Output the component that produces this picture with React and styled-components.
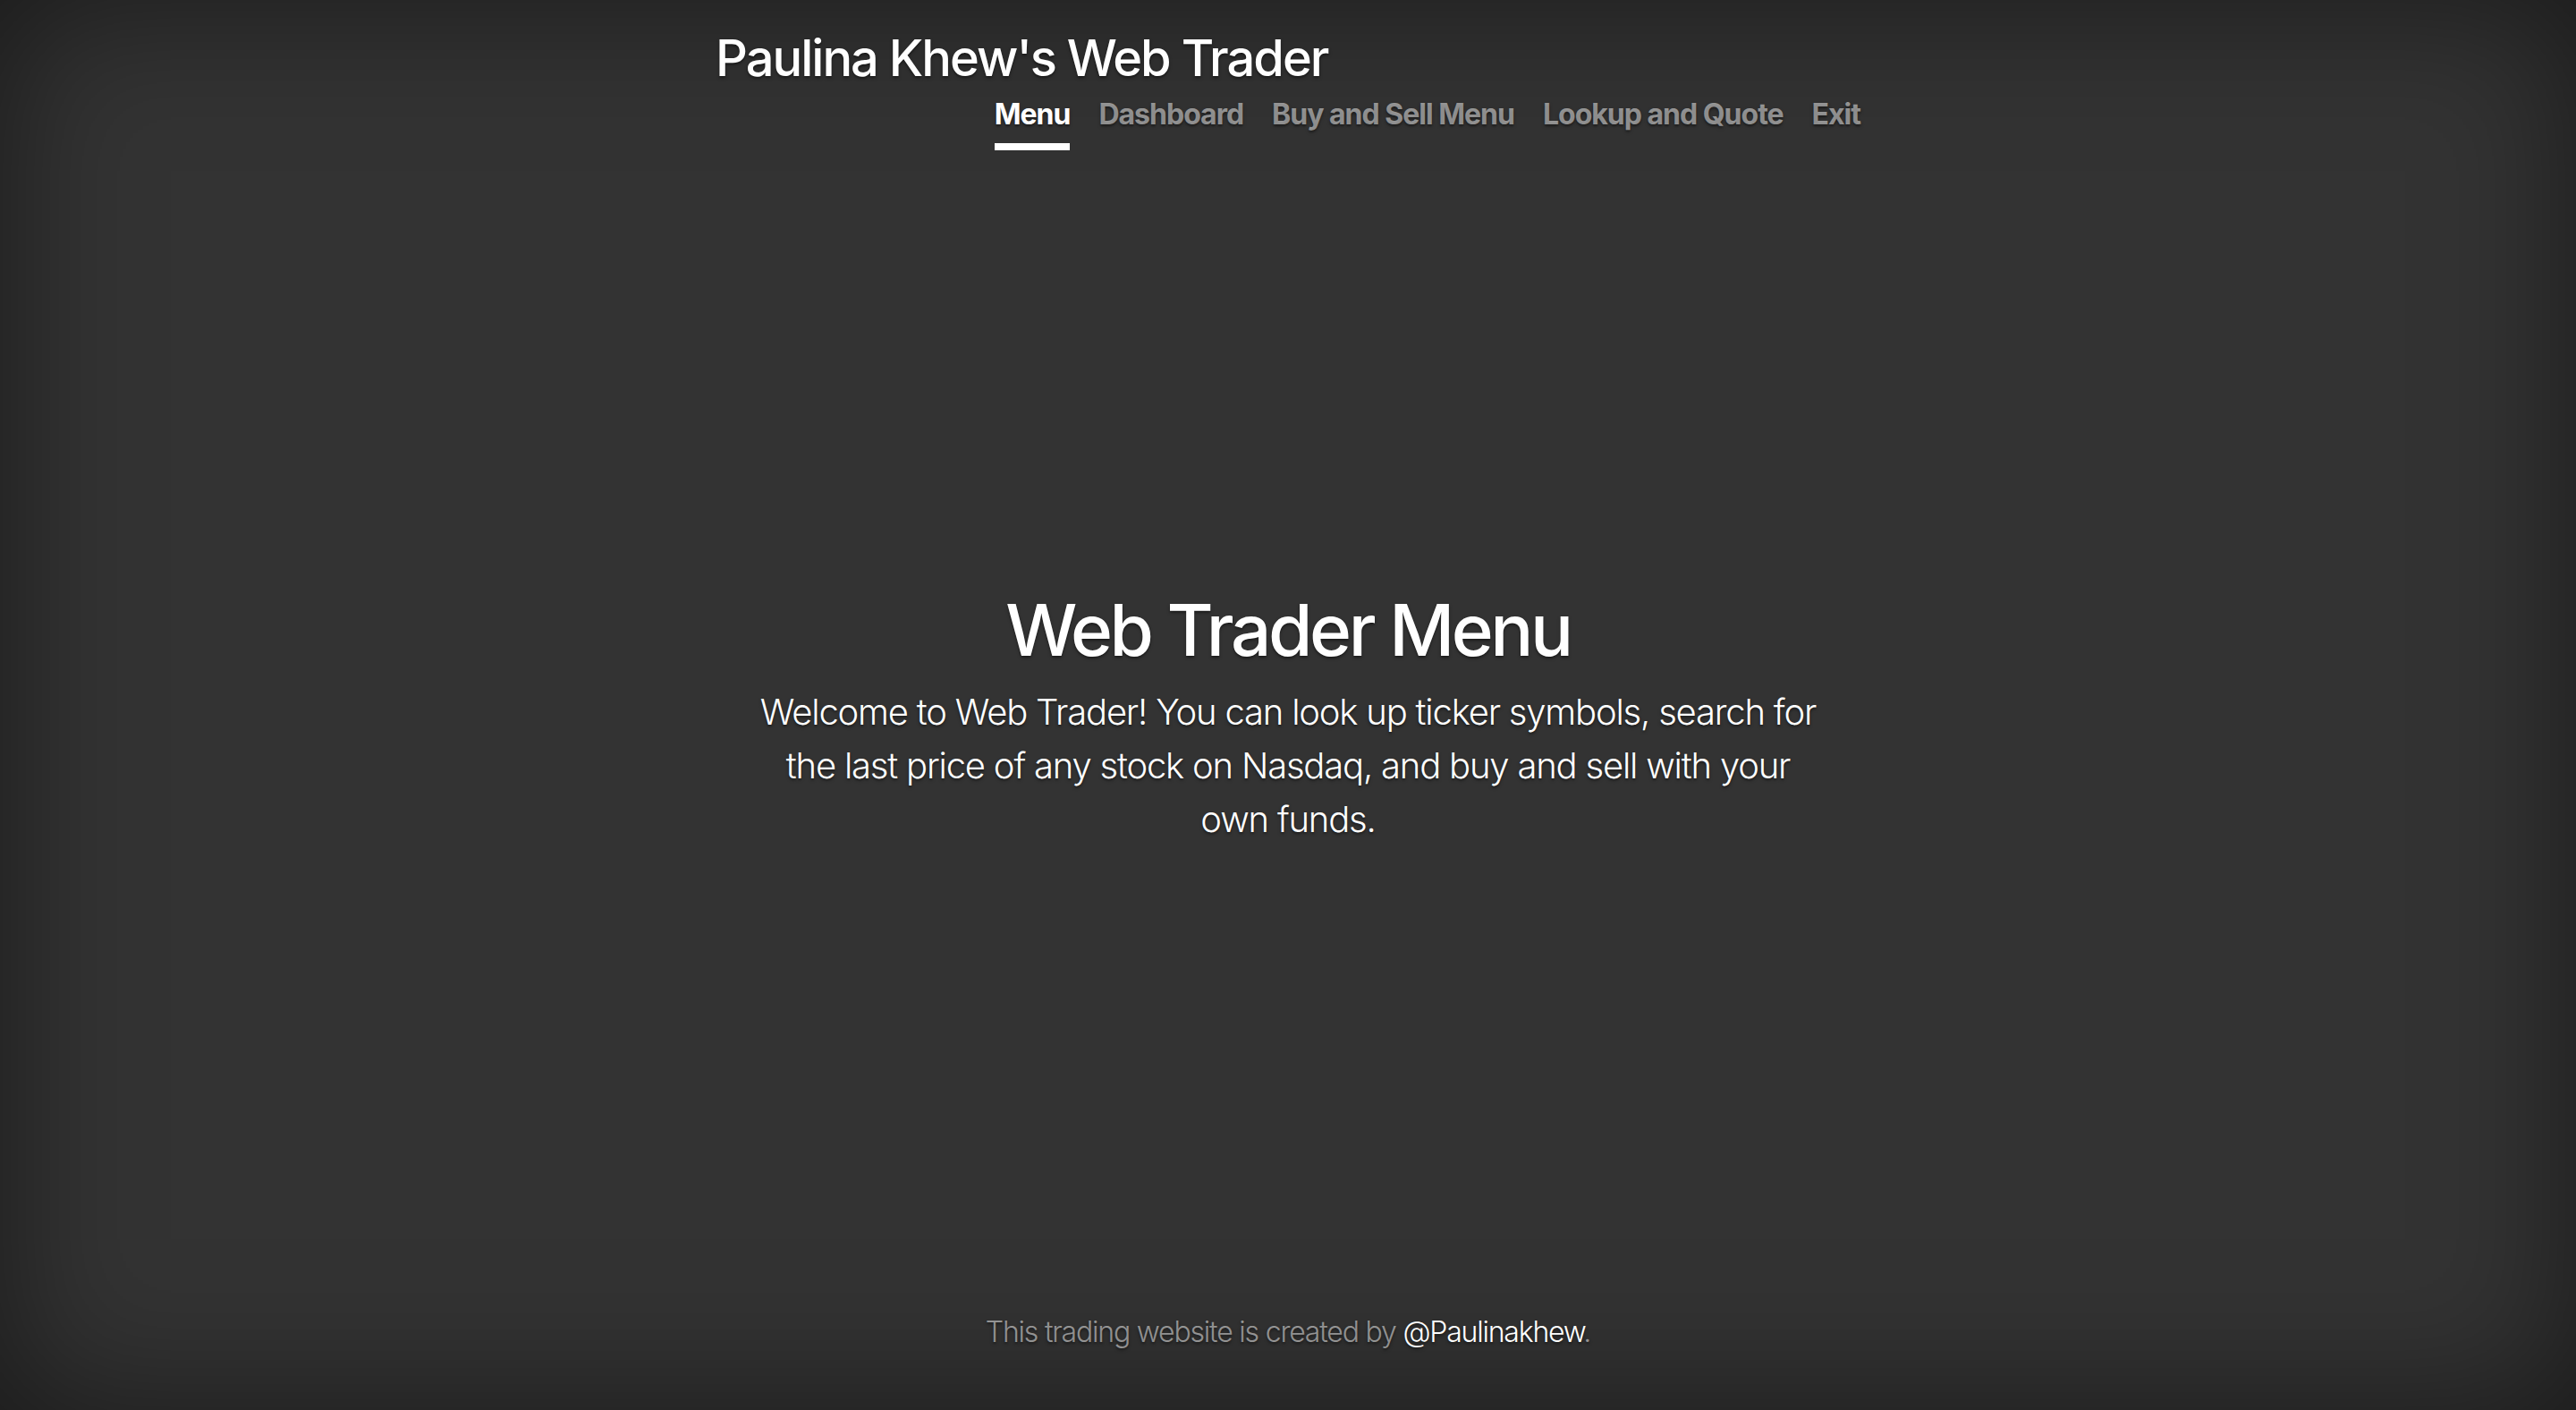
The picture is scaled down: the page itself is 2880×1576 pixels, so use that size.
import React from "react";
import styled, { createGlobalStyle } from "styled-components";

const GlobalStyle = createGlobalStyle`
  html, body, #root {
    height: 100%;
  }
  body {
    margin: 0;
    background-color: #333;
    color: #fff;
    font-family: Inter, "Noto Sans", "Liberation Sans", sans-serif;
    text-shadow: 0 1.6px 3.2px rgba(0, 0, 0, 0.5);
    box-shadow: inset 0 0 160px rgba(0, 0, 0, 0.5);
  }
`;

const navItems = ["Menu", "Dashboard", "Buy and Sell Menu", "Lookup and Quote", "Exit"];

function App() {
  return (
    <>
      <GlobalStyle />
      <Cover>
        <Masthead>
          <Brand>Paulina Khew's Web Trader</Brand>
          <Nav>
            {navItems.map((item, i) => (
              <NavLink key={item} href="#" $active={i === 0}>
                {item}
              </NavLink>
            ))}
          </Nav>
        </Masthead>

        <Main>
          <Heading>Web Trader Menu</Heading>
          <Lead>
            Welcome to Web Trader! You can look up ticker symbols, search for
            the last price of any stock on Nasdaq, and buy and sell with your
            own funds.
          </Lead>
        </Main>

        <Footer>
          <p>
            This trading website is created by <a href="#">@Paulinakhew</a>.
          </p>
        </Footer>
      </Cover>
    </>
  );
}

// Layout

const Cover = styled.div`
  display: flex;
  flex-direction: column;
  box-sizing: border-box;
  height: 100%;
  width: 100%;
  max-width: 1344px;
  margin: 0 auto;
  padding: 32px 32px 63px;
`;

const Masthead = styled.header`
  display: flex;
  flex-direction: column;
`;

const Brand = styled.h3`
  margin: 0;
  font-size: 56px;
  font-weight: 500;
  line-height: 1.2;
  letter-spacing: -2px;
`;

const Nav = styled.nav`
  display: flex;
  justify-content: flex-end;
  gap: 32px;
  margin-top: -3px;
`;

const NavLink = styled.a`
  padding: 8px 0;
  font-size: 32px;
  font-weight: 700;
  line-height: 1.5;
  letter-spacing: -1px;
  color: ${(p) => (p.$active ? "#fff" : "rgba(255, 255, 255, 0.5)")};
  text-decoration: none;
  border-bottom: 8px solid ${(p) => (p.$active ? "#fff" : "transparent")};
`;

const Main = styled.main`
  margin: auto 0;
  padding: 0 32px;
  text-align: center;
`;

const Heading = styled.h1`
  margin: 0 0 14px;
  font-size: 80px;
  font-weight: 500;
  line-height: 1.2;
  letter-spacing: -3.4px;
`;

const Lead = styled.p`
  max-width: 1190px;
  margin: 0 auto 32px;
  font-size: 40px;
  font-weight: 300;
  line-height: 1.5;
  letter-spacing: -1.2px;
`;

const Footer = styled.footer`
  text-align: center;
  color: rgba(255, 255, 255, 0.5);

  p {
    margin: 0;
    font-size: 32px;
    font-weight: 300;
    line-height: 1.5;
    letter-spacing: -1.2px;
  }
  a {
    color: #fff;
    text-decoration: none;
  }
`;

export default App;
